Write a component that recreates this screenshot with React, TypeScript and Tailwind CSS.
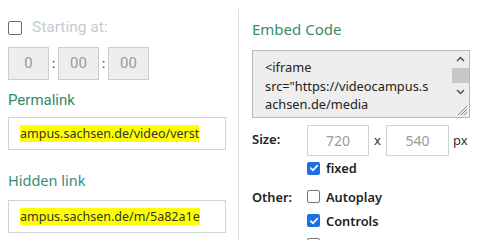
import React from "react";

function Check({ checked, size = 13, border = "#767676" }: { checked?: boolean; size?: number; border?: string }) {
  if (checked) {
    return (
      <span
        className="flex shrink-0 items-center justify-center rounded-[2px] bg-[#1b6fe0]"
        style={{ width: size, height: size }}
      >
        <svg width={size - 3} height={size - 3} viewBox="0 0 10 10">
          <path d="M1.8 5.2 L4 7.3 L8.3 2.6" fill="none" stroke="#fff" strokeWidth="1.7" strokeLinecap="round" strokeLinejoin="round" />
        </svg>
      </span>
    );
  }
  return (
    <span
      className="block shrink-0 rounded-[2px] border bg-white"
      style={{ width: size, height: size, borderColor: border }}
    />
  );
}

export default function App() {
  return (
    <div className="flex h-[240px] w-[480px] overflow-hidden bg-white" style={{ fontFamily: "'Noto Sans', sans-serif" }}>
      {/* Left column */}
      <div className="w-[238px] shrink-0 pl-[8px] pr-[12px] pt-[21px]">
        <div className="flex h-[14px] items-center gap-[10px]">
          <span className="block h-[14px] w-[14px] rounded-[2px] border-[1.5px] border-[#6d6a80] bg-white" />
          <span className="text-[15.5px] leading-none text-[#c3ccd4]" style={{ fontFamily: "Roboto, sans-serif" }}>
            Starting at:
          </span>
        </div>
        <div className="mt-[12px] flex items-center text-[15px] text-[#9a9a9a]" style={{ fontFamily: "Roboto, sans-serif" }}>
          <div className="flex h-[33px] w-[41px] items-center justify-center border border-[#cdcdcd] bg-[#eeeeee]">0</div>
          <span className="w-[9px] text-center text-[13px] text-[#222]">:</span>
          <div className="flex h-[33px] w-[41px] items-center justify-center border border-[#cdcdcd] bg-[#eeeeee]">00</div>
          <span className="w-[9px] text-center text-[13px] text-[#222]">:</span>
          <div className="flex h-[33px] w-[41px] items-center justify-center border border-[#cdcdcd] bg-[#eeeeee]">00</div>
        </div>
        <div className="mt-[8px] text-[15px] leading-[24px] text-[#2f8a66]" style={{ fontFamily: "Roboto, sans-serif" }}>
          Permalink
        </div>
        <div className="mt-[5px] flex h-[33px] w-[218px] items-center overflow-hidden whitespace-nowrap border border-[#cfd3d6] pl-[11px] text-[12.5px] text-[#333]">
          <span className="bg-[#ffff00] leading-[17px]">ampus.sachsen.de/video/verst</span>
        </div>
        <div className="mt-[20px] text-[14.5px] leading-[20px] text-[#3a8a78]">Hidden link</div>
        <div className="mt-[10px] flex h-[33px] w-[218px] items-center overflow-hidden whitespace-nowrap border border-[#cfd3d6] pl-[11px] text-[12.5px] text-[#333]">
          <span className="bg-[#ffff00] leading-[17px]">ampus.sachsen.de/m/5a82a1e</span>
        </div>
      </div>
      {/* Divider */}
      <div className="mt-[9px] w-px shrink-0 bg-[#dcdcdc]" />
      {/* Right column */}
      <div className="flex-1 pl-[13px] pt-[19px]">
        <div className="text-[15px] leading-[20px] text-[#3a8a66]">Embed Code</div>
        <div className="mt-[11px] flex h-[68px] w-[218px] border border-[#b9b9b9] bg-[#eeeeee]">
          <div className="flex-1 pl-[12px] pt-[7px] text-[12.8px] leading-[18.5px] text-[#222]">
            <div>&lt;iframe</div>
            <div>src="https://videocampus.s</div>
            <div>achsen.de/media</div>
          </div>
          <div className="relative flex w-[17px] flex-col items-center">
            <svg className="mt-[5px]" width="9" height="6" viewBox="0 0 9 6">
              <path d="M1 5 L4.5 1.5 L8 5" fill="none" stroke="#505050" strokeWidth="1.5" />
            </svg>
            <div className="mt-[6px] h-[15px] w-[17px] bg-[#c8c8c8]" />
            <svg className="mt-[6px]" width="9" height="6" viewBox="0 0 9 6">
              <path d="M1 1 L4.5 4.5 L8 1" fill="none" stroke="#505050" strokeWidth="1.5" />
            </svg>
            <svg className="absolute bottom-[1px] right-[1px]" width="12" height="12" viewBox="0 0 12 12">
              <path d="M11 2 L2 11 M11 5 L5 11 M11 8 L8 11" stroke="#888" strokeWidth="1" />
            </svg>
          </div>
        </div>
        <div className="mt-[7px] flex">
          <div className="w-[55px] pt-[5px] text-[13px] font-semibold leading-[18px] text-[#222]">Size:</div>
          <div className="flex flex-col">
            <div className="flex items-center text-[14px]">
              <div className="flex h-[31px] w-[62px] items-center justify-center border border-[#cfd3d6] text-[#9a9a9a]">720</div>
              <span className="w-[17px] text-center text-[13px] text-[#333]">x</span>
              <div className="flex h-[31px] w-[63px] items-center justify-center border border-[#cfd3d6] text-[#9a9a9a]">540</div>
              <span className="ml-[4px] text-[13px] text-[#333]">px</span>
            </div>
            <div className="mt-[5px] flex items-center gap-[6px]">
              <Check checked />
              <span className="text-[12.8px] font-semibold leading-[14px] text-[#222]">fixed</span>
            </div>
          </div>
        </div>
        <div className="mt-[15px] flex">
          <div className="w-[55px] text-[12.8px] font-semibold leading-[14px] text-[#222]">Other:</div>
          <div className="flex flex-col gap-[11px]">
            <div className="flex h-[13px] items-center gap-[6px]">
              <Check />
              <span className="text-[12.8px] font-semibold leading-[14px] text-[#222]">Autoplay</span>
            </div>
            <div className="flex h-[13px] items-center gap-[6px]">
              <Check checked />
              <span className="text-[12.8px] font-semibold leading-[14px] text-[#222]">Controls</span>
            </div>
            <div className="flex h-[13px] items-center gap-[6px]">
              <Check />
              <span className="text-[12.8px] font-semibold leading-[14px] text-[#222]">Fullscreen</span>
            </div>
          </div>
        </div>
      </div>
    </div>
  );
}
